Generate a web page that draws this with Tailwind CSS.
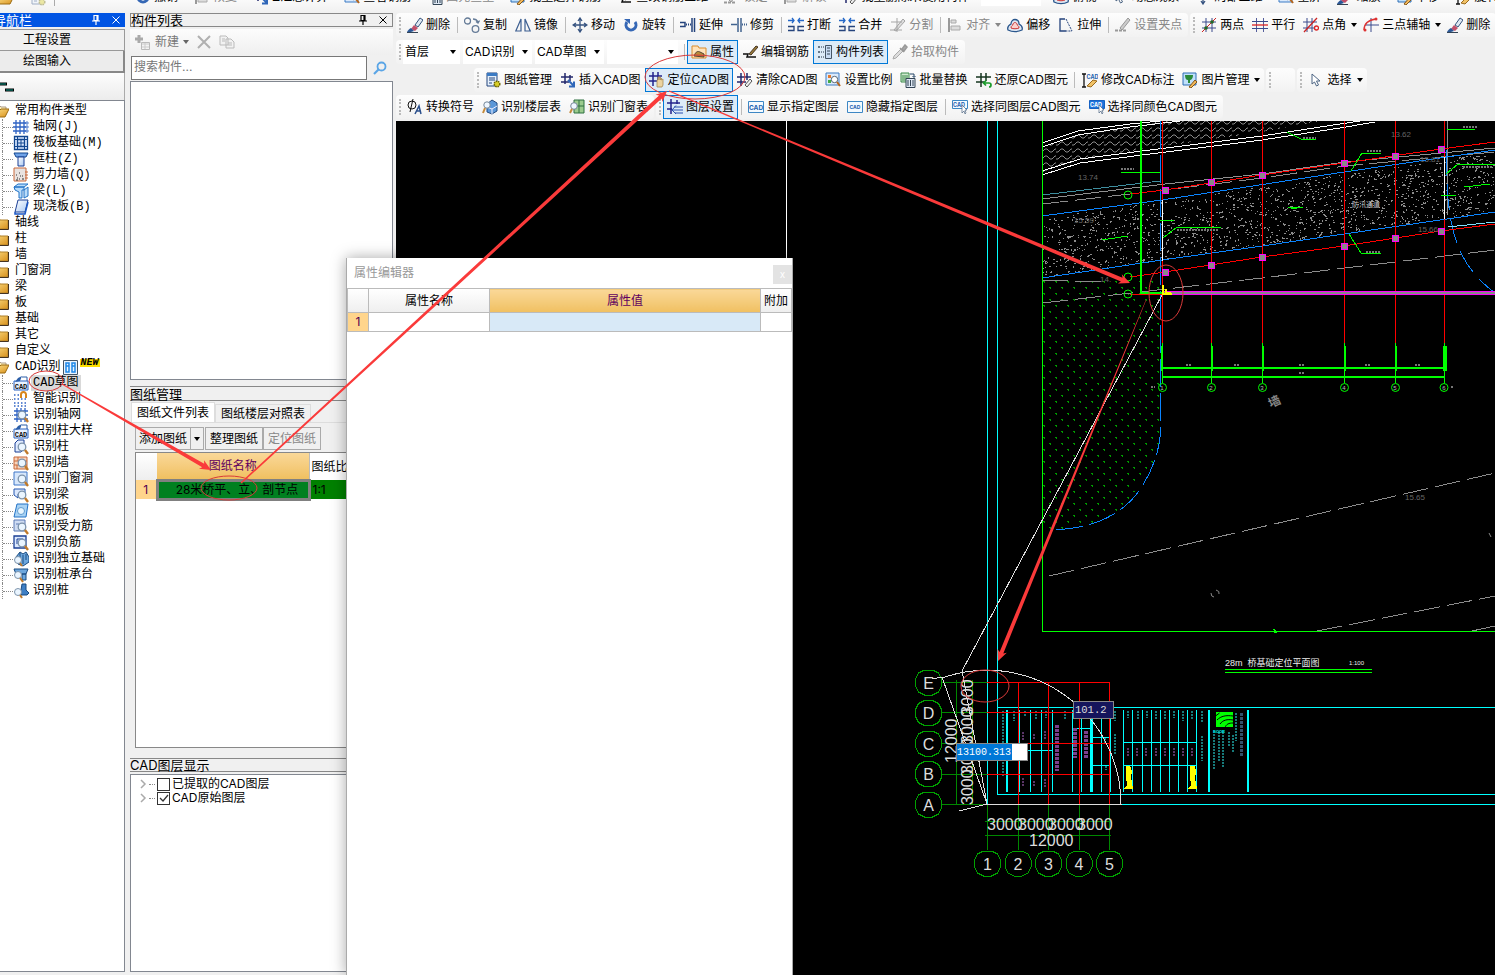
<!DOCTYPE html>
<html lang="zh-CN">
<head>
<meta charset="utf-8">
<title>CAD识别</title>
<script src="https://cdn.jsdelivr.net/npm/@tailwindcss/browser@4"></script>
</head>
<body class="relative flex h-screen flex-col overflow-hidden bg-[#f0f0f0] font-['Inter','Noto_Sans_CJK_SC',sans-serif] text-xs leading-4 text-black">

<svg class="absolute size-0">
  <defs>
    <linearGradient id="gold" x1="0" y1="0" x2="1" y2="1"><stop offset="0" stop-color="#ffe48c"/><stop offset="1" stop-color="#d8901c"/></linearGradient>
    <linearGradient id="sky" x1="0" y1="0" x2="1" y2="1"><stop offset="0" stop-color="#fff"/><stop offset="1" stop-color="#a9c9f3"/></linearGradient>
  </defs>
  <symbol id="i-brush" viewBox="0 0 16 16"><path d="M8 8l5-7 3 2-5 7z" fill="#dfe8f2" stroke="#35537c"/><path d="M7 8l4 3-3 3-4-2z" fill="#c2506a"/><path d="M4 11l3 3c-2 1-4 1-7 1 1-2 2-3 4-4z" fill="#2b5797"/><path d="M0 15.500h11" stroke="#345"/></symbol>
  <symbol id="i-copy" viewBox="0 0 16 16" ><g fill="none" stroke="#667c98" stroke-width="1.300"><circle cx="3.500" cy="4" r="3"/><circle cx="11.500" cy="12" r="3.300"/><path d="M9 2c3 0 4 1 5 3M12 4.500l2 1.500 1.500-2.500"/></g></symbol>
  <symbol id="i-mirror" viewBox="0 0 16 16"><g fill="none" stroke="#3d5f91" stroke-width="1.200"><path d="M6 2v12H.8zM10 2v12h5.200z"/></g></symbol>
  <symbol id="i-move" viewBox="0 0 16 16"><path d="M8 2v12M2 8h12M6 4l2-3 2 3M6 12l2 3 2-3M4 6L1 8l3 2M12 6l3 2-3 2" fill="none" stroke="#35527f" stroke-width="1.300"/></symbol>
  <symbol id="i-rot" viewBox="0 0 16 16"><path d="M4 5a5 5 0 1 0 8 0" fill="none" stroke="#3567b5" stroke-width="3"/><path d="M1 2h6v5z" fill="#3567b5"/></symbol>
  <symbol id="i-ext" viewBox="0 0 16 16"><path d="M0 5.500h5v4H0M14.500 1v14M12 1v14" fill="none" stroke="#24437c" stroke-width="1.500"/><path d="M6 7.500h6" stroke="#24437c" stroke-width="2" stroke-dasharray="1 1"/></symbol>
  <symbol id="i-trim" viewBox="0 0 16 16"><path d="M0 7.500h6M7 1v14M10 1v14" stroke="#41638f" stroke-width="1.500"/><path d="M11 7.500h5" stroke="#41638f" stroke-dasharray="1 1" stroke-width="2"/></symbol>
  <symbol id="i-break" viewBox="0 0 16 16"><path d="M0 3.500h6M4 1l2 2.500L4 6M16 3.500h-6M12 1l-2 2.500L12 6" stroke="#2468c8" fill="none" stroke-width="1.300"/><path d="M0 9.500h6v4H0M16 9.500h-6v4h6" fill="none" stroke="#24437c" stroke-width="1.300"/></symbol>
  <symbol id="i-split" viewBox="0 0 16 16"><path d="M1 5h11M0 13h12M7 1v14M4 13l9-11 2 2-9 10z" stroke="#a5a5a5" fill="#ddd"/></symbol>
  <symbol id="i-align" viewBox="0 0 16 16"><path d="M2 1v14" stroke="#999" stroke-width="2"/><path d="M4 3h5v3H4zM4 9h9v4H4z" fill="#ddd" stroke="#aaa"/></symbol>
  <symbol id="i-offset" viewBox="0 0 16 16"><path d="M1 13c-1-3 1-5 3-6 0-6 8-6 8 0 2 1 4 3 3 6-4 2-10 2-14 0z" fill="#dfe7f2" stroke="#29568c" stroke-width="1.300"/><path d="M4 11c0-3 2-2 2-4 1-2 3-2 4 0 0 2 2 1 2 4-2 1-6 1-8 0z" fill="#fbd0cc" stroke="#c33"/></symbol>
  <symbol id="i-stretch" viewBox="0 0 16 16"><path d="M8 14H2V2h5" fill="none" stroke="#24437c" stroke-width="1.300"/><path d="M8 2l6 12H8" fill="none" stroke="#24437c" stroke-dasharray="2 1"/></symbol>
  <symbol id="i-grip" viewBox="0 0 16 16"><path d="M5 11l8-10 2 2-8 10z" fill="#ccc" stroke="#999"/><path d="M0 13.500h12" stroke="#999" stroke-dasharray="3 1" stroke-width="2"/></symbol>
  <symbol id="i-axis2" viewBox="0 0 16 16"><path d="M5 1v14M11 1v14M1 5h14M1 11h14" stroke="#3a4a8c"/><path d="M1 15L15 1" stroke="#c22"/><circle cx="11" cy="5" r="1.800" fill="#262"/><circle cx="5" cy="11" r="1.800" fill="#262"/></symbol>
  <symbol id="i-para" viewBox="0 0 16 16"><path d="M4.500 1v14M11.500 1v14" stroke="#555e9c"/><path d="M0 4.500h16M0 11.500h16" stroke="#3a4a8c"/><path d="M0 8h16" stroke="#d22" stroke-width="1.300"/></symbol>
  <symbol id="i-angle" viewBox="0 0 16 16"><path d="M4 1v14M9 1v14M0 5h14M0 11h12" stroke="#3a4a8c"/><path d="M1 15L14 1" stroke="#c22" stroke-width="1.300"/><circle cx="13.500" cy="11" r="2" fill="none" stroke="#d22" stroke-width="1.300"/></symbol>
  <symbol id="i-arc" viewBox="0 0 16 16"><path d="M8 1v14M2 8h14" stroke="#3a4a8c"/><path d="M1 13c0-7 4-10 12-11" stroke="#d33" fill="none" stroke-width="1.300"/><circle cx="2" cy="13" r="1.500" fill="#d33"/><circle cx="13" cy="2" r="1.500" fill="#d33"/></symbol>
  <symbol id="i-prop" viewBox="0 0 16 16"><path d="M1 2h6l1 2h7v10H1z" fill="#ffe3ba" stroke="#d98b2b"/><path d="M3 12c2-5 4-5 6-4l4 2v3z" fill="#b98b3a" stroke="#543"/></symbol>
  <symbol id="i-edit" viewBox="0 0 16 16"><path d="M1 10h5l-1 3h9" fill="none" stroke="#111" stroke-width="1.500"/><path d="M7 10l7-8 2 1-7 8z" fill="#9a7b3a" stroke="#432"/></symbol>
  <symbol id="i-list" viewBox="0 0 16 16"><path d="M8.500 1.500h6v13h-6z" fill="#c8dcf4" stroke="#456"/><path d="M10 4h3M10 7h3M10 10h3" stroke="#345"/><path d="M1 2h2v2H1zM1 7h2v2H1zM1 12h2v2H1z" fill="#678"/><path d="M4 3h3M4 8h3M4 13h3" stroke="#234" stroke-dasharray="1 1"/></symbol>
  <symbol id="i-pick" viewBox="0 0 16 16"><path d="M1 15l1-3 7-7 2 2-7 7z" fill="#ddd" stroke="#aaa"/><path d="M8 4l4 4M10 5l3-4 2 2-3 4z" stroke="#999" stroke-width="1.500" fill="#aaa"/></symbol>
  <symbol id="i-book" viewBox="0 0 16 16"><path d="M2 1h10v13H2z" fill="#e6f0fb" stroke="#23457c"/><path d="M2 1h10v3H2z" fill="#3b7bc4"/><path d="M4 6h6M4 8h6M4 11h3" stroke="#23457c"/><circle cx="12" cy="12" r="2.800" fill="#d9cf28" stroke="#6b6400" stroke-width="1.500" stroke-dasharray="1.500 .8"/></symbol>
  <symbol id="i-hash" viewBox="0 0 16 16"><path d="M5 1v11M10 3v6M1 5h12M1 10h8" stroke="#23286c" stroke-width="1.500"/><path d="M8 8l6 6M9 14.500h5v-5" stroke="#2f66b8" stroke-width="2" fill="none"/></symbol>
  <symbol id="i-loc" viewBox="0 0 16 16"><path d="M4 0v14M9 0v9M0 4h13M0 9h8" stroke="#23238c" stroke-width="1.500"/><path d="M8 15V8h1V5h1v3-3h1.500v3l1-2v2l1.500-1v6l-1 2z" fill="#ecd3a0" stroke="#a78a55" stroke-width=".8"/></symbol>
  <symbol id="i-clear" viewBox="0 0 16 16"><path d="M4 1v13M10 1v7M0 5h14M0 10h9" stroke="#23286c" stroke-width="1.500"/><path d="M8 13l5-6 2 2-5 6z" fill="#eee" stroke="#555"/></symbol>
  <symbol id="i-scale" viewBox="0 0 16 16"><path d="M1 1h13v12H1z" fill="#dbeafc" stroke="#3b7bc4"/><path d="M3 3h3v3H3z" fill="#e67a2e"/><path d="M3 8h3v3H3z" fill="#4a4"/><circle cx="9.500" cy="7.500" r="3.200" fill="#fff" stroke="#567"/><path d="M12 10l3 4" stroke="#b5651d" stroke-width="2"/></symbol>
  <symbol id="i-batch" viewBox="0 0 16 16"><path d="M1 1h8v9H1z" fill="#cfe9cf" stroke="#3a8a4a"/><path d="M3 3v6M5 3v6M7 3v6" stroke="#3a8a4a"/><path d="M6 6.500h9v9H6z" fill="#dfe9f5" stroke="#345"/><path d="M8 8v6M10.500 8v6M13 8v6" stroke="#345"/><path d="M10 2h4v3M12.500 4L14 5.500 15.500 4" stroke="#246" fill="none"/></symbol>
  <symbol id="i-restore" viewBox="0 0 16 16"><path d="M5 1v14M10 1v8M0 5h15M0 10h8" stroke="#16361f" stroke-width="1.500"/><path d="M8 11h5a2 2 0 0 1 0 4M10 8.500L7.500 11l2.500 2.500" stroke="#1a9a2a" stroke-width="1.700" fill="none"/></symbol>
  <symbol id="i-mod" viewBox="0 0 16 16"><path d="M0 2h4M0 15h4M2 2v13" stroke="#111" fill="none" stroke-width="1.300"/><text x="4.500" y="7" font-size="5.500" font-weight="700" fill="#1c62b0">CAD</text><path d="M5 14l6-6 4 1-6 6z" fill="#f1c267" stroke="#9a6a1c"/></symbol>
  <symbol id="i-pic" viewBox="0 0 16 16"><path d="M1 1h13v12H1z" fill="#bfe0fb" stroke="#2f6eb5"/><path d="M3 3h8c0 4-2 5-3 5v3H6V8C4 8 3 6 3 3z" fill="#2a8a3a"/><path d="M7 15l6-7 2 2-6 6z" fill="#f3b95c" stroke="#85581a"/></symbol>
  <symbol id="i-arrow" viewBox="0 0 16 16"><path d="M4 2v10l2.500-2 2 4 2-1-2-4H12z" fill="#fff" stroke="#4d6583"/></symbol>
  <symbol id="i-phi" viewBox="0 0 16 16"><ellipse cx="5" cy="6" rx="4" ry="4" fill="none" stroke="#111"/><path d="M6 0L3 13" stroke="#111"/><path d="M8 15l4-8 2 8M10 12h4" stroke="#2a4f8c" fill="none" stroke-width="1.500"/></symbol>
  <symbol id="i-floor" viewBox="0 0 16 16"><path d="M5 5l5-4 5 3v8l-5 3-5-2z" fill="#5b97d8" stroke="#234a80"/><path d="M5 8l5 2 5-3M10 10v5" stroke="#eef" fill="none"/><circle cx="5" cy="6" r="3.200" fill="#eef6ff" stroke="#789"/><path d="M3 9l-2 5" stroke="#c58a3a" stroke-width="2"/></symbol>
  <symbol id="i-door" viewBox="0 0 16 16"><path d="M5 1h10v13H5z" fill="#9ccb8e" stroke="#2e7040"/><path d="M10 1v13M5 7h10" stroke="#2e7040"/><circle cx="5" cy="7" r="3.300" fill="#eef6ff" stroke="#789"/><path d="M3 10l-2 4" stroke="#c58a3a" stroke-width="2"/></symbol>
  <symbol id="i-layer" viewBox="0 0 16 16"><path d="M4 0v15M0 4h13M0 10h5M10 1v4" stroke="#23238c" stroke-width="1.500"/><path d="M7 8h9M5 11h11M8 14h8M9 6.500L5 11l4 4" stroke="#2a4fb0" fill="none"/></symbol>
  <symbol id="i-cad" viewBox="0 0 16 16"><path d="M.5 2.500h15v11H.5z" fill="#f4faff" stroke="#3d87c4"/><text x="8" y="10.500" text-anchor="middle" font-size="6.500" font-weight="700" fill="#1c62b0">CAD</text></symbol>
  <symbol id="i-cad2" viewBox="0 0 16 16"><path d="M.5 2.500h15v11H.5z" fill="#f4faff" stroke="#3d87c4"/><text x="8" y="10" text-anchor="middle" font-size="5" font-weight="700" fill="#1c62b0">CAD</text></symbol>
  <symbol id="i-cad3" viewBox="0 0 16 16"><path d="M.5 1.500h15v8H.5z" fill="#f4faff" stroke="#3d87c4"/><text x="7" y="8" text-anchor="middle" font-size="5.500" font-weight="700" fill="#1c62b0">CAD</text><path d="M10 6v8l2-2 1 3 1-1-1-3h2z" fill="#fff" stroke="#4d6583" stroke-width=".7"/></symbol>
  <symbol id="i-cad4" viewBox="0 0 16 16"><path d="M.5 1.500h15v8H.5z" fill="#1d74dc" stroke="#1660c0"/><text x="7" y="8" text-anchor="middle" font-size="5.500" font-weight="700" fill="#fff">CAD</text><path d="M10 6v8l2-2 1 3 1-1-1-3h2z" fill="#fff" stroke="#4d6583" stroke-width=".7"/></symbol>
  <symbol id="i-folder" viewBox="0 0 16 16"><path d="M0 3h6l1 2h8v9H0z" fill="url(#gold)" stroke="#b08028"/><path d="M0 14.500h15.500V5" fill="none" stroke="#432"/></symbol>
  <symbol id="i-open" viewBox="0 0 16 16"><path d="M0 3h7l1 1h5v4H0z" fill="#fff0b8" stroke="#a98"/><path d="M0 13V8h6l2-2h8l-4 8H0z" fill="url(#gold)" stroke="#9a6b12"/></symbol>
  <symbol id="t-net" viewBox="0 0 16 16"><path d="M3 1v14M7 1v14M11 1v14M0 4h13M0 8h13M0 12h13" stroke="#2f63c4" stroke-width="1.300"/><path d="M13 3h2v2h-2zM13 7h2v2h-2zM13 11h2v2h-2z" fill="#fff" stroke="#2f63c4" stroke-width=".8"/></symbol>
  <symbol id="t-raft" viewBox="0 0 16 16"><path d="M1.500 1.500h13v13h-13zM4.500 4.500h7v7h-7z" fill="#dbe9ff" stroke="#12468f" stroke-width="1.300"/><path d="M4.500 1v14M8 4v8M11.500 1v14M1 4.500h14M4 8h8M1 11.500h14" stroke="#12468f"/></symbol>
  <symbol id="t-col" viewBox="0 0 16 16"><path d="M1 2h14l-2 4H3z" fill="#6fa2e8" stroke="#12468f"/><path d="M5 6h6v9H5z" fill="url(#sky)" stroke="#1b3f94"/></symbol>
  <symbol id="t-wall" viewBox="0 0 16 16"><path d="M1 1h12v13H1z" fill="#e8e2e0" stroke="#c8683a"/><path d="M3 8h1M6 6h1M9 9h1M4 11h1M7 9h1M3 13h2M9 12h2M6 12h1" stroke="#333" stroke-width="1.200"/><path d="M12 5h3M12 8h3M12 11h3" stroke="#c8683a"/></symbol>
  <symbol id="t-beam" viewBox="0 0 16 16"><path d="M1 4l4-3h10l-4 3zM1 4h10v3H9v8H6V9L2 7zM11 7l4-3v9l-4 2z" fill="#b9dcfa" stroke="#2373c6"/></symbol>
  <symbol id="t-slab" viewBox="0 0 16 16"><path d="M5 1h10l-3 12H2z" fill="url(#sky)" stroke="#1b3f94"/><path d="M2 13v2h10l3-12" fill="none" stroke="#1b57c4" stroke-width="1.500"/></symbol>
  <symbol id="t-cad" viewBox="0 0 16 16"><path d="M1 6h14v9H1z" fill="#eaf3ff" stroke="#2a62c2"/><path d="M2 7l3-4 4-2-2 5z" fill="#2c5fa8"/><path d="M9 2h5v4" fill="none" stroke="#2c5fa8"/><text x="8" y="13.500" text-anchor="middle" font-size="7" font-weight="700" fill="#111">CAD</text></symbol>
  <symbol id="t-smart" viewBox="0 0 16 16"><path d="M1 4h6M1 8h13M1 12h13M1 15h13" stroke="#2f63c4" stroke-width="1.500" stroke-dasharray="1.500 2"/><path d="M8 7V3.500a2.500 2.500 0 0 1 5 0V7" fill="none" stroke="#d8861c" stroke-width="2"/></symbol>
  <symbol id="mag" viewBox="0 0 16 16"><circle cx="9" cy="8" r="3.800" fill="#eaf5ff" stroke="#7c93ab" stroke-width="1.300"/><path d="M12 11l3 4" stroke="#c07a2a" stroke-width="2.300"/></symbol>
  <symbol id="t-rnet" viewBox="0 0 16 16"><path d="M4 1v14M8 1v14M12 1v14M1 4h14M1 8h14M1 12h14" stroke="#2f63c4" stroke-width="1.300"/><use href="#mag"/></symbol>
  <symbol id="t-rcol" viewBox="0 0 16 16"><path d="M2 4l3-3h6v9l-3 3H2z" fill="#e1ecff" stroke="#1b3f94"/><use href="#mag"/></symbol>
  <symbol id="t-rwall" viewBox="0 0 16 16"><path d="M1 2h13v12H1zM1 6h13M1 10h13M5 2v4M10 6v4M4 10v4" fill="#f8d4bc" stroke="#c8683a"/><use href="#mag"/></symbol>
  <symbol id="t-rwin" viewBox="0 0 16 16"><path d="M1 1h13v13H1z" fill="#d7e7fb" stroke="#3f77c8"/><use href="#mag"/></symbol>
  <symbol id="t-rbeam" viewBox="0 0 16 16"><path d="M1 2h11v5H5v4L1 8z" fill="#dbe8fd" stroke="#2456b0"/><use href="#mag"/></symbol>
  <symbol id="t-rslab" viewBox="0 0 16 16"><path d="M4 1h11l-2 13H1z" fill="#a8d2f4" stroke="#2373c6"/><circle cx="8" cy="8" r="3.500" fill="#e8f6ff" stroke="#5f9bd0"/></symbol>
  <symbol id="t-rbar" viewBox="0 0 16 16"><path d="M1 1h11v11H1zM3 5h3v4M8 4v4" fill="#cfdcf2" stroke="#5b78b4"/><use href="#mag"/></symbol>
  <symbol id="t-rneg" viewBox="0 0 16 16"><path d="M1 1h12v12H1z" fill="#dbe8fd" stroke="#1b3f94" stroke-width="1.300"/><path d="M4 9V4h6v5" fill="none" stroke="#1b3f94"/><use href="#mag"/></symbol>
  <symbol id="t-rfound" viewBox="0 0 16 16"><path d="M3 6l4-5 3 2 3-2 3 5v5l-6 4-5-2z" fill="#6da7dd" stroke="#194a80"/><path d="M7 2v5M10 4v9M13 3v6" stroke="#194a80"/><circle cx="5" cy="9" r="3.500" fill="#eaf5ff" stroke="#7c93ab"/><path d="M7 12l2 3" stroke="#c07a2a" stroke-width="2"/></symbol>
  <symbol id="t-rcap" viewBox="0 0 16 16"><path d="M1 2h14l-2 5H3zM9 7h4v6H9z" fill="#6da7dd" stroke="#194a80"/><circle cx="5" cy="8" r="3.500" fill="#eaf5ff" stroke="#7c93ab"/><path d="M7 11l3 4" stroke="#c07a2a" stroke-width="2"/></symbol>
  <symbol id="t-rpile" viewBox="0 0 16 16"><path d="M9 1h4v6l3 3-2 2H8V7z" fill="#3f7fc4" stroke="#194a80"/><circle cx="5" cy="9" r="3.500" fill="#eaf5ff" stroke="#7c93ab"/><path d="M7 12l2 3" stroke="#c07a2a" stroke-width="2"/></symbol>
  <symbol id="pin" viewBox="0 0 10 10"><path d="M3 .5h4v5H3zM1 6h8M5 6v4M6 1v4" fill="none" stroke="currentColor" stroke-width="1.200"/></symbol>
  <symbol id="x" viewBox="0 0 10 10"><path d="M1.500 1.500l7 7M8.500 1.500l-7 7" stroke="currentColor"/></symbol>
</svg>

<!-- main toolbar, scrolled partly off the top edge -->
<header id="top" class="flex h-[13px] shrink-0 items-end gap-2 overflow-hidden bg-gradient-to-b from-[#fafafa] to-[#f0f0f0] pb-[7px] whitespace-nowrap"></header>

<div class="flex min-h-0 flex-1">
  <nav class="flex w-[125px] shrink-0 flex-col pb-[3px]">
    <div class="flex h-[14px] items-center gap-2 bg-[#0054e3] pr-1 text-[13px] text-white">
      <span class="-ml-[7px] flex-1">导航栏</span>
      <svg class="size-[10px]"><use href="#pin"/></svg><svg class="ml-0.5 size-[10px]"><use href="#x"/></svg>
    </div>
    <button class="mt-0.5 h-[22px] border-t border-r border-b border-[#999] bg-[#f0f0f0] pl-[23px] text-left">工程设置</button>
    <button class="h-[22px] border-r-2 border-b-2 border-[#888] bg-[#ececec] pl-[23px] text-left">绘图输入</button>
    <div class="h-[27px] border-r border-[#aaa] bg-gradient-to-b from-[#fdfdfd] to-[#ececec] pt-[9px]">
      <svg width="16" height="12"><path d="M0 2h7M5 8h9" stroke="#000" stroke-width="3"/><path d="M0 2h6M6 8h7" stroke="#0a9a8a"/></svg>
    </div>
    <ul id="tree" class="min-h-0 flex-1 overflow-hidden border border-l-0 border-[#828790] bg-white pt-0.5 font-['Liberation_Mono','Noto_Sans_CJK_SC',sans-serif] whitespace-nowrap"></ul>
  </nav>

  <div class="ml-[5px] flex w-[263px] shrink-0 flex-col pb-[3px]">
    <div class="flex h-[14px] items-center gap-2 border border-[#888] pr-1 text-[13px]">
      <span class="flex-1">构件列表</span>
      <svg class="size-[10px]"><use href="#pin"/></svg><svg class="ml-0.5 size-[10px]"><use href="#x"/></svg>
    </div>
    <div class="mt-0.5 flex h-[26px] items-center gap-1 bg-gradient-to-b from-[#fcfcfc] to-[#efefef] pl-1 text-[#777]">
      <svg width="17" height="16"><path d="M5 1v8M1 5h8" stroke="#aaa" stroke-width="3"/><path d="M7.500 8.500h8v7h-8z" fill="#f4f4f4" stroke="#bbb"/><path d="M8 10h7M8 13h7M11 9v6" stroke="#ccc"/></svg>
      <button class="flex items-center gap-1">新建<svg width="6" height="4"><path d="M0 0h6L3 4z" fill="#666"/></svg></button>
      <svg class="ml-1" width="14" height="14"><path d="M1 1l12 12M13 1L1 13" stroke="#b0b0b0" stroke-width="2"/></svg>
      <svg class="ml-1" width="16" height="14"><path d="M1 1h6l2 2v7H1zM7 4h5l3 3v6H7z" fill="#f2f2f2" stroke="#bbb"/><path d="M9 8h4M9 10h4M3 4h3M3 6h3" stroke="#bbb"/></svg>
    </div>
    <div class="flex h-[26px] items-center">
      <input type="text" aria-label="搜索构件" placeholder="搜索构件..." class="ml-px h-6 min-w-0 flex-1 border border-[#777] bg-white px-0.5 pb-1 placeholder:text-[#777]">
      <button aria-label="搜索" class="flex w-[26px] justify-center"><svg width="14" height="14"><circle cx="8.500" cy="5.500" r="4" fill="none" stroke="#5aa5e6" stroke-width="1.800"/><path d="M5.500 8.500L1 13" stroke="#5aa5e6" stroke-width="2.200"/></svg></button>
    </div>
    <div class="h-[299px] border border-[#828790] bg-white"></div>
    <div class="mt-[6px] flex h-[15px] items-center border-y border-[#888] text-[13px]">图纸管理</div>
    <div class="mt-[1px] flex h-[21px] items-end border-b border-[#ddd] pl-px">
      <button class="h-5 border border-b-0 border-[#ddd] bg-white px-[5px]">图纸文件列表</button>
      <button class="h-[18px] border border-b-0 border-[#ddd] bg-[#f0f0f0] px-[5px]">图纸楼层对照表</button>
    </div>
    <div class="mt-1 flex h-[23px] pl-[5px]">
      <button class="border border-[#aaa] px-[3px]">添加图纸</button>
      <button aria-label="更多" class="-ml-px flex w-[14px] items-center justify-center border border-[#aaa]"><svg width="6" height="4"><path d="M0 0h6L3 4z"/></svg></button>
      <button class="ml-px border border-[#aaa] px-1">整理图纸</button>
      <button class="border border-[#aaa] px-1 text-[#888]">定位图纸</button>
    </div>
    <div class="mt-[2px] ml-[5px] min-h-0 flex-1 overflow-hidden border border-[#888] bg-white">
      <table class="w-[300px] table-fixed border-collapse">
        <tr class="h-[27px]"><th class="w-[21px] bg-gradient-to-b from-white to-[#eee]"></th><th class="w-[152px] border-r border-[#bbb] bg-gradient-to-b from-[#fad898] to-[#f0c060] font-normal text-[#600060]">图纸名称</th><th class="pl-0.5 text-left font-normal">图纸比例</th></tr>
        <tr class="h-[19px]"><td class="bg-[#ffd58c] text-center text-[#500050]">1</td><td class="border-[3px] border-[#808080] bg-[#008020] pl-2 text-center">28米桥平、立、剖节点</td><td class="bg-[#008000] pl-0.5">1:1</td></tr>
      </table>
    </div>
    <div class="mt-[10px] flex h-[14px] items-center border-y border-[#888] text-[13px]">CAD图层显示</div>
    <div class="mt-[2px] h-[198px] border border-[#828790] bg-white pt-0.5 pl-2">
      <label class="flex h-[14px] items-center gap-0.5"><svg width="8" height="10"><path d="M2 1l4 4-4 4" fill="none" stroke="#aaa" stroke-width="1.500"/></svg><span class="w-1.5 border-t border-dotted border-[#888]"></span><input type="checkbox" class="size-[13px] appearance-none border border-[#333] bg-white">已提取的CAD图层</label>
      <label class="flex h-[14px] items-center gap-0.5"><svg width="8" height="10"><path d="M2 1l4 4-4 4" fill="none" stroke="#aaa" stroke-width="1.500"/></svg><span class="w-1.5 border-t border-dotted border-[#888]"></span><span class="relative flex"><input type="checkbox" checked class="size-[13px] appearance-none border border-[#333] bg-white"><svg class="pointer-events-none absolute inset-0" width="13" height="13"><path d="M3 6l3 3 5-6" fill="none" stroke="#333" stroke-width="1.300"/></svg></span>CAD原始图层</label>
    </div>
  </div>

  <main class="ml-[3px] flex min-w-0 flex-1 flex-col">
    <div class="flex h-[108px] shrink-0 flex-col overflow-hidden whitespace-nowrap">
      <div id="r1" class="flex h-6 gap-0.5"></div>
      <div id="r2" class="mt-[3px] flex h-6 gap-1"></div>
      <div id="r3" class="mt-1 ml-[78px] flex h-6 gap-0.5"></div>
      <div id="r4" class="mt-[3px] flex h-6 gap-0.5"></div>
    </div>
    <div class="relative min-h-0 flex-1 overflow-hidden bg-black">
      <svg class="absolute inset-0 size-full" font-family="Liberation Sans, Noto Sans CJK SC, sans-serif">
        <defs>
          <pattern id="waves" width="16" height="7" patternUnits="userSpaceOnUse"><path d="M0 5h2l3-3h2l3 3h2l3-3h1" fill="none" stroke="#8a8a8a"/></pattern>
          <pattern id="grass" x="1043" y="280" width="12" height="12" patternUnits="userSpaceOnUse"><path d="M0 1h2v2h-1v-1h-1zM6 7h2v2h-1v-1h-1z" fill="#009a00"/></pattern>
        </defs>
        <g id="cad" transform="translate(-396 -121)" fill="none" shape-rendering="crispEdges">
          <path d="M786.500 121v140" stroke="#fff"/>
          <path d="M1042 146l38-12 85-13h155l-58 11-112 16-70 12-38 12z" fill="url(#waves)"/>
          <path d="M1042 280h119v150q-2 40-45 82-30 18-74 18z" fill="url(#grass)"/>
          <path id="gravel" stroke="#8c8c8c"/>
          <path d="M1042 143l36-12 52-7 30-3M1042 147l36-12 52-8 50-6M1042 171l38-12 70-9 112-14 78-12 20-3M1042 175l38-12 70-9 112-14 78-12 35-6" stroke="#fff"/>
          <path d="M1042 195l118-14" stroke="#3f8fa0"/>
          <path d="M1042 199l123-15 97-10 83-12 150-14M1447 121v94" stroke="#909090"/>
          <path d="M1042 204l123-14 97-12 83-12 150-14M1042 303l98-11 122-14 83-10 150-18M1042 280l63 2M1049 576l446-103M1317 631l178-35M1472 631l23-5" stroke="#8c8c8c" stroke-dasharray="26 7"/>
          <path d="M1042 216l120-16 182-28 151-22M1042 278l120-18 100-14 82-12 151-22" stroke="#0a84ff"/>
          <path d="M1160.500 121v312q-2 28-20 56-28 40-90 41" stroke="#0a84ff" stroke-dasharray="28 6"/>
          <path d="M1446 150c1 70 5 110 49 143" stroke="#0a84ff" stroke-dasharray="26 8"/>
          <path d="M1448 227l47-5" stroke="#7fe0ff"/>
          <path d="M1162.500 121v226M1211.500 121v226M1262.500 121v226M1344.500 121v226M1395.500 121v226M1444.500 121v226M1130 194l35-4 97-15 82-12 97-14 54-7M1130 277l35-5 97-15 82-11 97-15 54-7M1130 294h32" stroke="#f00"/>
          <path d="M1162.500 200v61M1444.500 157v62" stroke="#fff"/>
          <path d="M1042.500 121v510.500H1495M1121 172h39M1211.500 343v40M1262.500 343v40M1344.500 343v40M1395.500 343v40M1444.500 343v40M1162.500 343v40" stroke="#0f0"/>
          <path d="M1141 121v172h21M1161 368h286M1162 377h282M1162 346v25M1211.500 346v25M1262.500 346v25M1344.500 346v25M1395.500 346v25" stroke="#0f0" stroke-width="2"/>
          <path d="M1445 346v25" stroke="#0f0" stroke-width="4"/>
          <path d="M1287 132l14 7h15M1351 171l11-18h19M1446 174l12-10h37M1163 238l14-11h44M1349 234l12 19h20M1160 220h14M1102 240l26-4M1288 207h15l-12 2M1441 195h15M1464 187l26-3M1447 129h28M1273 629l4 3-3 1" stroke="#0f0"/>
          <path d="M1163 293h332" stroke="#f0f" stroke-width="4"/><path d="M1163 293h332" stroke="#888" stroke-width="2"/>
          <path d="M1163 285v9h9M1166 289v4h5" stroke="#ff0" stroke-width="2"/>
          <g id="squares" fill="#888" stroke="#f0f"></g>
          <g stroke="#0f0" shape-rendering="auto"><circle cx="1128" cy="195" r="4"/><circle cx="1128" cy="277" r="4"/><circle cx="1128" cy="294" r="4"/><circle cx="1162.500" cy="387.500" r="4"/><circle cx="1211.500" cy="387.500" r="4"/><circle cx="1262.500" cy="387.500" r="4"/><circle cx="1344.500" cy="387.500" r="4"/><circle cx="1395.500" cy="387.500" r="4"/><circle cx="1444" cy="387.500" r="4"/></g>
          <g fill="#bbb" font-size="6" text-anchor="middle"><text x="1162" y="390">1</text><text x="1211" y="390">2</text><text x="1262" y="390">3</text><text x="1344" y="390">4</text><text x="1395" y="390">5</text><text x="1444" y="390">6</text></g>
          <path d="M1186 364.500h5M1234 364.500h5M1299 364.500h6M1365 364.500h5M1415 364.500h5M1299 373h6M1121 169h13M1303 137.500h13M1367 151h15M1463 127h14M1463 167h30M1177 229.500h42M1366 251.500h14M1151 387h4M1451 387h3" stroke="#777" stroke-width="2" stroke-dasharray="2 1"/>
          <g fill="#666" font-size="8"><text x="1078" y="180">13.74</text><text x="1391" y="137">13.62</text><text x="1074" y="223">15.59</text><text x="1418" y="232">15.66</text><text x="1420" y="162">15.81</text><text x="1405" y="500">15.65</text><text x="1100" y="282">14.</text></g>
          <text x="1352" y="207" fill="#ccc" font-size="7">防汛通道</text>
          <text x="1268" y="406" fill="#888" font-size="12" font-weight="700" transform="rotate(-25 1274 401)">墙</text>
          <path d="M1211 593q0 4 3 4M1216 590q4 1 3 4M1489 533l2 4" stroke="#888" shape-rendering="auto"/>
          <text x="1225" y="666" fill="#eee" font-size="9">28m&#160; 桥基础定位平面图</text><text x="1349" y="665" fill="#eee" font-size="6">1:100</text>
          <path d="M1225 669.500h147M1225 672.500h147" stroke="#0f0"/>

          <path d="M987.500 121v683M997.500 121v673.500H1495M997.500 707.500H1495M1122 804.500h373M1019.500 710v82M1030.500 710v82M1041.500 710v82M1052.500 710v82M1072.500 710v82M1081.500 710v82M1101.500 710v82M1110.500 710v82M1123.500 710v82M1132.500 710v82M1142.500 710v82M1151.500 710v82M1160.500 710v82M1169.500 710v82M1178.500 710v82M1187.500 710v82M1196.500 710v82M1123 742.500h73M1123 765.500h73M1072 728.500h19M1093 737.500h17M1093 765.500h17M1028 750.500h24" stroke="#0ff"/>
          <path d="M1007 710v82M1209 710v82M1248 710v82" stroke="#0ff" stroke-width="2"/><path d="M1091.500 715v77" stroke="#0ff" stroke-width="3"/>
          <path d="M1003 711v65M1014 711v10M1025 711v6M1036 711v8M1046 711v7M1065 711v8M1115 711v10M1115 734v20M1128 711v7M1138 711v9M1147 711v7M1156 711v8M1165 711v8M1174 711v7M1183 711v10M1192 711v8M1202 711v12M1202 736v25M1105 738v6M1106 766v4M1214 734v35M1219 732v30M1223 732v36M1229 732v14M1233 735v18M1236 713v28" stroke="#177a7a" stroke-width="2" stroke-dasharray="2 1"/>
          <path d="M1057 725v46M1074.500 728v30M1085.500 731v27" stroke="#7a3f8c" stroke-width="4" stroke-dasharray="3 1"/>
          <path d="M1023 732v9M1034 734v6M1045 731v8M1023 778v8M1034 781v6M1045 779v8M1128 748v8M1137 748v8M1146 748v8M1156 748v8M1165 748v8M1174 748v8M1183 748v8M1192 748v8" stroke="#5a3566" stroke-width="2" stroke-dasharray="2 1"/>
          <path d="M1241 713v43" stroke="#33506a" stroke-width="3" stroke-dasharray="3 1"/>
          <path d="M1126 766h4l2 5-1 6 1 6 1 6h-9l3-4-1-8zM1190 766h5l1 6-1 6 2 11h-9l3-4-1-8z" fill="#ff0"/>
          <path d="M1216 712h17v15h-17z" fill="#0f0"/><path d="M1215.500 716l4-3M1217 720c4-4 9-5 16-4M1220 724c3-4 7-5 13-4M1225 728c1-4 4-5 8-5" stroke="#000" shape-rendering="auto"/>
          <text x="1213" y="733" fill="#0ff" font-size="4" font-weight="700">BOOR</text>

          <path d="M987 682.500h122.500V804M987 712.500h122M987 743.500h122M987 774.500h122M1018.500 682v122M1048.500 682v122M1079.500 682v122" stroke="#f00"/>
          <path d="M941 682.500h46M941 712.500h46M941 743.500h46M941 774.500h46M941 804.500h46M956.500 680v125M972.500 680v125M987.500 804v46M1018.500 804v46M1048.500 804v46M1079.500 804v46M1109.500 804v46M985 821.500h126M985 835.500h126" stroke="#008800"/>
          <g id="bubbles" stroke="#00a000"></g>
          <g id="labels" fill="#ddd" font-size="16" text-anchor="middle"></g>
          <g fill="#ddd" font-size="16"><text x="987" y="830">3000</text><text x="1018" y="830">3000</text><text x="1048" y="830">3000</text><text x="1077" y="830">3000</text><text x="1029" y="846">12000</text>
            <g transform="translate(973 805) rotate(-90)"><text>3000</text><text x="31">3000</text><text x="61">3000</text><text x="90">3000</text></g><text transform="translate(957 763) rotate(-90)">12000</text></g>
          <g stroke="#ddd"><path d="M1162 295L962 671l25 133-45-127-10 2M987 804.500h134A134 134 0 0 0 942 678M959 811l28-7"/></g>
          <path d="M1073.500 701.500h40v17h-40z" fill="#15155c" stroke="#888"/><text x="1075" y="713" fill="#ddd" font-size="10.500" font-family="Liberation Mono">101.2</text>
        </g>
      </svg>
      <input aria-label="长度" value="13100.313" class="absolute top-[622px] left-[560px] h-[18px] w-[72px] border border-[#888] bg-[linear-gradient(90deg,#0078d7_55px,#fff_55px)] font-['Liberation_Mono',monospace] text-[10px] text-white">
    </div>
  </main>
</div>

<!-- floating property editor -->
<section class="absolute top-[258px] bottom-0 left-[346px] flex w-[447px] flex-col border-x border-[#aaa] bg-white shadow-[0_0_14px_rgba(0,0,0,0.35)]">
  <div class="flex h-[30px] items-center justify-between pl-[7px] text-[#999]"><span>属性编辑器</span><button aria-label="关闭" class="mt-[2px] h-[19px] w-[19px] bg-[#e3e3e3] text-[10px] text-white">x</button></div>
  <table class="w-full table-fixed border-collapse border-t border-[#aaa]">
    <tr class="h-6 bg-gradient-to-b from-white to-[#eee]"><th class="w-[21px] border border-[#bbb]"></th><th class="w-[121px] border border-[#bbb] font-normal">属性名称</th><th class="border border-[#bbb] bg-gradient-to-b from-[#fad898] to-[#f0c060] font-normal text-[#600060]">属性值</th><th class="w-[31px] border border-[#bbb] font-normal">附加</th></tr>
    <tr class="h-[19px]"><td class="border border-[#bbb] bg-[#ffd58c] text-center text-[#500050]">1</td><td class="border border-[#bbb]"></td><td class="border border-[#bbb] bg-[#d8e9f7]"></td><td class="border border-[#bbb]"></td></tr>
  </table>
</section>

<!-- red annotation layer -->
<svg class="pointer-events-none absolute inset-0 size-full">
  <g fill="none" stroke="#d93a3a"><ellipse cx="46" cy="381" rx="17" ry="10"/><ellipse cx="229" cy="488" rx="28" ry="12"/><ellipse cx="695" cy="77" rx="50" ry="22"/><ellipse cx="1166" cy="293" rx="17" ry="28"/><ellipse cx="985" cy="686" rx="24" ry="16"/></g>
  <g id="arrows" fill="#fa3a3a"></g>
</svg>

<script>
const $ = id => document.getElementById(id);
const icon = (n, c) => `<svg class="size-4 shrink-0${c || ''}" aria-hidden="true"><use href="#${n}"/></svg>`;
const drop = `<svg class="-mr-0.5 ml-0.5 shrink-0" width="6" height="4"><path d="M0 0h6L3 4z" fill="currentColor"/></svg>`;
const btn = (i, t, o = '') => `<button class="flex shrink-0 items-center gap-[3px] px-[3px] border ${o.includes('b') ? 'border-[#0078d7] bg-[#dcebf8]' : 'border-transparent'} ${o.includes('g') ? 'text-[#888]' : ''}">${icon(i)}<span>${t}</span>${o.includes('d') ? drop : ''}</button>`;
const sep = `<span class="flex w-1.5 shrink-0 justify-center py-1"><i class="w-px bg-[#bbb]"></i></span>`;
const bar = h => `<div class="flex shrink-0 rounded-sm bg-gradient-to-b from-[#fdfdfd] to-[#f2f2f2] pr-0.5"><span class="my-1 mr-0.5 ml-[3px] w-0 border-l-2 border-dotted border-[#bbb]"></span>${h}</div>`;
const sel = (t, w) => `<label class="relative mr-[3px] flex shrink-0 items-center bg-white ${w}"><select aria-label="${t || '构件'}" class="w-full appearance-none bg-transparent pl-0.5"><option>${t}</option></select><svg class="pointer-events-none absolute right-1" width="6" height="4"><path d="M0 0h6L3 4z"/></svg></label>`;

$('r1').innerHTML = bar(btn('i-brush','删除')+sep+btn('i-copy','复制')+btn('i-mirror','镜像')+sep+btn('i-move','移动')+btn('i-rot','旋转')+sep+btn('i-ext','延伸')+btn('i-trim','修剪')+sep+btn('i-break','打断')+btn('i-break','合并')+btn('i-split','分割','g')+sep+btn('i-align','对齐','gd')+btn('i-offset','偏移')+btn('i-stretch','拉伸')+sep+btn('i-grip','设置夹点','g'))
 + bar(btn('i-axis2','两点')+btn('i-para','平行')+btn('i-angle','点角','d')+btn('i-arc','三点辅轴','d')+btn('i-brush','删除'));
$('r2').innerHTML = bar(sel('首层','w-[57px]')+sel('CAD识别','w-[69px]')+sel('CAD草图','w-[69px]')+sel('','w-[71px]')+sep+btn('i-prop','属性','b')+btn('i-edit','编辑钢筋')+btn('i-list','构件列表','b')+btn('i-pick','拾取构件','g'));
$('r3').innerHTML = bar(btn('i-book','图纸管理')+btn('i-hash','插入CAD图')+btn('i-loc','定位CAD图','b')+btn('i-clear','清除CAD图')+btn('i-scale','设置比例')+btn('i-batch','批量替换')+btn('i-restore','还原CAD图元')+sep+btn('i-mod','修改CAD标注')+btn('i-pic','图片管理','d'))
 + bar('<span class="w-5"></span>') + bar(btn('i-arrow','选择','d'));
$('r4').innerHTML = bar(btn('i-phi','转换符号')+btn('i-floor','识别楼层表')+btn('i-door','识别门窗表'))
 + bar(btn('i-layer','图层设置','b')+sep+btn('i-cad','显示指定图层')+btn('i-cad2','隐藏指定图层')+sep+btn('i-cad3','选择同图层CAD图元')+btn('i-cad4','选择同颜色CAD图元'));
$('top').innerHTML = '<span class="ml-[-2px] flex">'+icon('i-open')+'</span><span class="ml-2 flex opacity-40">'+icon('i-book')+'</span><span class="mr-[68px] h-4 w-px shrink-0 bg-[#aaa]"></span>'
 + [['i-rot','撤销'],['i-align','恢复','g'],['i-hash','Σ汇总计算'],['i-scale','查看钢筋'],['i-batch','图元查量','g'],['i-pic','批量选择钢筋'],['i-edit','查改钢筋三维'],['i-grip','锁定','g'],['i-align','解锁','g'],['i-clear','批量删除未使用构件']].map(a=>btn(...a)).join('')
 + '<span class="h-5 w-[60px] shrink-0 bg-white"></span>'
 + [['i-offset','俯视'],['i-arrow','动态观察'],['i-move','局部三维'],['i-scale','全屏'],['i-brush','缩放'],['i-pic','平移'],['i-mod','旋转']].map(a=>btn(...a)).join('');

const kids = [['t-net','轴网(J)'],['t-raft','筏板基础(M)'],['t-col','框柱(Z)'],['t-wall','剪力墙(Q)'],['t-beam','梁(L)'],['t-slab','现浇板(B)']];
const cad = [['t-cad','CAD草图'],['t-smart','智能识别'],['t-rnet','识别轴网'],['t-cad','识别柱大样'],['t-rcol','识别柱'],['t-rwall','识别墙'],['t-rwin','识别门窗洞'],['t-rbeam','识别梁'],['t-rslab','识别板'],['t-rbar','识别受力筋'],['t-rneg','识别负筋'],['t-rfound','识别独立基础'],['t-rcap','识别桩承台'],['t-rpile','识别桩']];
const root = (i, t, x = '') => `<li class="flex h-4 items-center gap-1.5"><svg class="-ml-[7px] size-4 shrink-0"><use href="#${i}"/></svg><span>${t}</span>${x}</li>`;
const leaf = ([i, t], on) => `<li class="ml-0.5 flex h-4 items-center border-l border-dotted border-[#888]"><span class="w-2.5 border-t border-dotted border-[#888]"></span>${icon(i)}<span class="ml-0.5 px-0.5 ${on ? 'bg-[#d9d9d9]' : ''}">${t}</span></li>`;
$('tree').innerHTML = root('i-open','常用构件类型') + kids.map(k => leaf(k)).join('')
 + ['轴线','柱','墙','门窗洞','梁','板','基础','其它','自定义'].map(t => root('i-folder', t)).join('')
 + root('i-open','CAD识别','<svg class="-ml-1 shrink-0" width="15" height="15"><path d="M.5.500h14v14H.5z" fill="#eaf4ff" stroke="#456"/><path d="M3 3h3v9H3zM9 3h3v9H9zM3 6h3M9 6h3" fill="none" stroke="#1d86e8" stroke-width="1.500"/></svg><b class="-ml-1 self-start bg-[#ffe000] px-px text-[10px] leading-[8px] italic">NEW</b>')
 + cad.map((k, n) => leaf(k, n === 0)).join('');

// Deterministic gravel hatch between the two road edges
let s = 7; const rnd = () => (s = (s * 16807) % 2147483647) / 2147483647;
let g = '';
for (let n = 0; n < 1500; n++) {
  const x = 1043 + rnd() * 452, top = 216 - (x - 1042) * .146, y = top + 2 + rnd() * 59;
  const X = Math.round(x), Y = Math.round(y);
  g += `M${X} ${Y}.5h${rnd() > .6 ? 2 : 1}` + (rnd() > .8 ? `M${X} ${Y + 1}.5h1` : '');
}
$('gravel').setAttribute('d', g);
$('squares').innerHTML = [[1165,190],[1211,182],[1262,175],[1344,163],[1395,156],[1441,149],[1165,272],[1211,265],[1262,257],[1344,246],[1395,238],[1441,231]].map(([x,y]) => `<rect x="${x-2.5}" y="${y-2.5}" width="6" height="6"/>`).join('');
const marks = [...'EDCBA'].map((c,i) => [928.5, 682.5 + i * 30.5, c]).concat([...'12345'].map((c,i) => [987.5 + i * 30.5, 863.5, c]));
$('bubbles').innerHTML = marks.map(([x,y]) => `<path d="M${x-4} ${y-12.5}h8l6 3 3 6v7l-3 6-6 3h-8l-6-3-3-6v-7l3-6z"/>`).join('');
$('labels').innerHTML = marks.map(([x,y,c]) => `<text x="${x}" y="${y+6}">${c}</text>`).join('');
$('arrows').innerHTML = [[62,384,211,470,1,4],[241,483,667,91,1.5,4],[669,91,1130,283,1,4],[1146,300,998,661,.5,4]].map(([a,b,c,d,w0,w]) => {
  const l = Math.hypot(c-a,d-b), u = (c-a)/l, v = (d-b)/l, p = (t,k) => `${(c-u*t-v*k).toFixed(1)},${(d-v*t+u*k).toFixed(1)}`;
  return `<polygon points="${p(l,w0/2)} ${p(9,w/2)} ${p(11,5)} ${c},${d} ${p(11,-5)} ${p(9,-w/2)} ${p(l,-w0/2)}"/>`;
}).join('');
</script>
</body>
</html>
